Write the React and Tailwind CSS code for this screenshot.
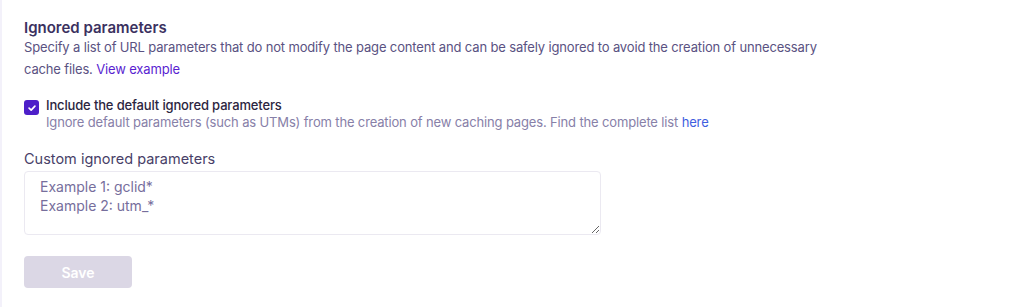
import React from 'react';

export default function App() {
  return (
    <div className="min-h-[307px] w-[1024px] bg-white border-l-2 border-[#f3f1fa] font-['Inter',sans-serif]">
      <div className="px-[22px] pt-[19px]">
        <h2 className="text-[15px] font-semibold leading-[17px] text-[#3b3160]">Ignored parameters</h2>
        <p className="max-w-[820px] text-[13px] leading-[22px] tracking-[-0.15px] text-[#5a5282]">
          Specify a list of URL parameters that do not modify the page content and can be safely ignored to avoid the creation of unnecessary cache files.{' '}
          <a href="#" className="text-[#5a1fd1]">View example</a>
        </p>

        <div className="mt-[17px] flex gap-[7px]">
          <span className="mt-[3px] flex h-[15px] w-[15px] shrink-0 items-center justify-center rounded-[3px] bg-[#4d1fc9]">
            <svg viewBox="0 0 12 12" className="h-[10px] w-[10px]" fill="none" stroke="white" strokeWidth="2" strokeLinecap="round" strokeLinejoin="round">
              <path d="M2.5 6.2 5 8.5 9.5 3.8" />
            </svg>
          </span>
          <div className="text-[13px] leading-[17px] tracking-[-0.15px]">
            <div className="font-medium text-[#2c2540]">Include the default ignored parameters</div>
            <div className="text-[#8780a8]">
              Ignore default parameters (such as UTMs) from the creation of new caching pages. Find the complete list{' '}
              <a href="#" className="text-[#3f5ee0]">here</a>
            </div>
          </div>
        </div>

        <label className="mt-[18px] block text-[14.5px] leading-[20px] text-[#483f68]">Custom ignored parameters</label>
        <textarea
          className="mt-[2px] block h-[64px] w-[577px] rounded-[4px] border border-[#ebe9f1] px-[15px] pt-[6px] text-[14px] leading-[18.5px] text-[#2c2540] placeholder:text-[#766e9c] outline-none"
          placeholder={'Example 1: gclid*\nExample 2: utm_*'}
        />

        <button className="mt-[21px] h-[32px] w-[108px] rounded-[4px] bg-[#dbd7e5] text-[14px] font-semibold text-white">
          Save
        </button>
      </div>
    </div>
  );
}
